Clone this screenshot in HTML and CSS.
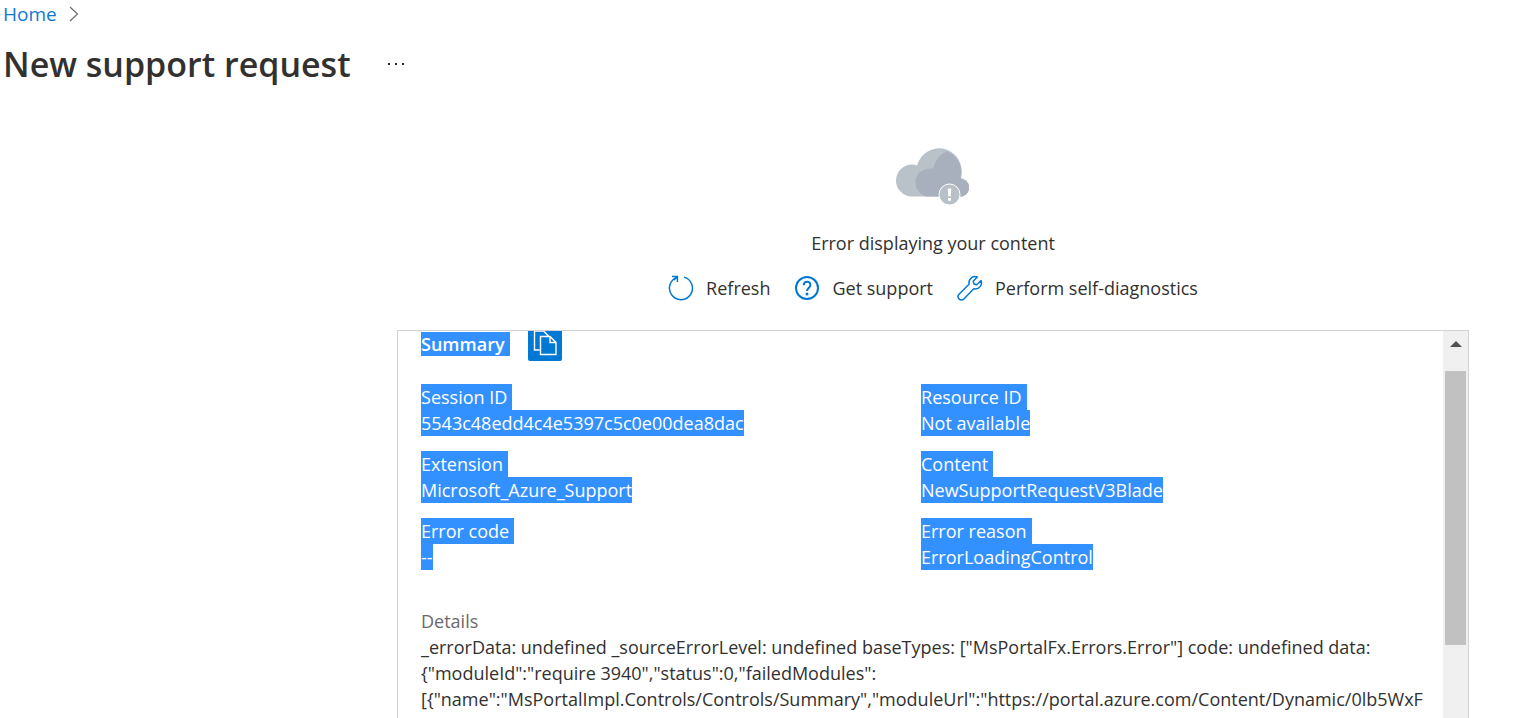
FILE: index.html
```html
<!DOCTYPE html>
<html lang="en">
<head>
<meta charset="utf-8">
<title>New support request</title>
<link rel="stylesheet" href="styles.css">
</head>
<body>
<header class="header">
  <nav class="breadcrumb" aria-label="Breadcrumb">
    <a href="#">Home</a>
    <svg width="10" height="16" viewBox="0 0 10 16" fill="none" stroke="#6b6b6b" stroke-width="1.2"><path d="M1 1l7.500 7L1 15"/></svg>
  </nav>
  <div class="title-row">
    <h1>New support request</h1>
    <button class="more" type="button" aria-label="More"><svg width="18" height="4" viewBox="0 0 18 4" fill="#222"><path d="M1 1h2v2H1zM8 1h2v2H8zM15 1h2v2h-2z"/></svg></button>
  </div>
</header>
<main class="content">
  <svg class="cloud" width="76" height="58" viewBox="0 0 76 58">
    <path fill="#b9c1c9" d="M17 48.500A16 16 0 0 1 17 16.500c1.800 0 3.500.3 5.200.9A22.500 22.500 0 0 1 66.500 24c0 2.400-.3 4.500-.8 6.500a9.200 9.200 0 0 1 1.800 18z"/>
    <path fill="#a9b0bd" d="M31 48.500C24 46 20.500 40.500 20.500 34c0-8.500 7-14.500 18-13.500C40 12.500 45 6 51.500 3.200 60.500 6.800 66.500 15 66.500 24c0 2.400-.3 4.500-.8 6.500a9.200 9.200 0 0 1 1.800 18z"/>
    <circle cx="54.500" cy="46.500" r="10.500" fill="#b7bfc8" stroke="#fff" stroke-width="1"/>
    <path fill="#fff" d="M52.700 40.500h3.600l-.6 8h-2.400zM53 50h3v2.800h-3z"/>
  </svg>
  <p class="message">Error displaying your content</p>
  <div class="actions">
    <button class="action" type="button">
      <svg width="26" height="26" viewBox="0 0 26 26" fill="none" stroke="#0078d4" stroke-width="1.500"><path d="M16 2.100A11.500 11.500 0 1 1 9 2.400M4 1.600h5.400V7M9.400 1.600L6 5"/></svg>
      Refresh</button>
    <button class="action" type="button">
      <svg width="26" height="26" viewBox="0 0 26 26" fill="none" stroke="#0078d4" stroke-width="2"><circle cx="13" cy="13" r="11"/><path d="M9.800 10.200c0-4.600 6.600-4.400 6.600-.4 0 3-3.400 3.200-3.400 6.200"/><circle cx="13" cy="19" r="1.500" fill="#0078d4" stroke="none"/></svg>
      Get support</button>
    <button class="action" type="button">
      <svg width="26" height="26" viewBox="0 0 26 26" fill="none" stroke="#0078d4" stroke-width="1.500" stroke-linejoin="round"><path d="M20.300 2c-4-1.600-9 1.500-8.300 7.200L2 19.200c-3 3.200 1.600 7.700 4.800 4.800l10-10.200c5.500 1 9-4 7.200-8.200l-4.300 4.200-2.700-.8-.8-2.700z"/></svg>
      Perform self-diagnostics</button>
  </div>
  <section class="panel">
    <div class="panel-body">
      <div class="summary-head">
        <h2 class="mark gap">Summary</h2>
        <button class="copy" type="button" aria-label="Copy summary">
          <svg width="26" height="28" viewBox="0 0 26 28" fill="none" stroke="#fff" stroke-width="1.400"><path d="M7.500 20H2.500V1h9l5 5M8.500 6.500h9.500l6 6v12H8.500zM18 6.500v6h6"/></svg>
        </button>
      </div>
      <dl class="facts">
        <div><dt class="mark gap">Session ID</dt><dd class="mark">5543c48edd4c4e5397c5c0e00dea8dac</dd></div>
        <div><dt class="mark gap">Resource ID</dt><dd class="mark">Not available</dd></div>
        <div><dt class="mark gap">Extension</dt><dd class="mark">Microsoft_Azure_Support</dd></div>
        <div><dt class="mark gap">Content</dt><dd class="mark">NewSupportRequestV3Blade</dd></div>
        <div><dt class="mark gap">Error code</dt><dd class="mark">--</dd></div>
        <div><dt class="mark gap">Error reason</dt><dd class="mark">ErrorLoadingControl</dd></div>
      </dl>
      <h3>Details</h3>
      <p class="details">_errorData: undefined _sourceErrorLevel: undefined baseTypes: ["MsPortalFx.Errors.Error"] code: undefined data:<br>{"moduleId":"require 3940","status":0,"failedModules":<br>[{"name":"MsPortalImpl.Controls/Controls/Summary","moduleUrl":"https://portal.azure.com/Content/Dynamic/0lb5WxF</p>
    </div>
    <div class="scrollbar">
      <svg width="12" height="6" viewBox="0 0 12 6" fill="#505050"><path d="M6 0l6 6H0z"/></svg>
      <div class="thumb"></div>
    </div>
  </section>
</main>
</body>
</html>
```
FILE: styles.css
```css
* { box-sizing: border-box; }
body {
  margin: 0;
  height: 100vh;
  overflow: hidden;
  display: flex;
  flex-direction: column;
  background: #fff;
  color: #323130;
  font: 18px/26px "Open Sans", "Noto Sans", sans-serif;
}
h1, h2, h3, p, dl, dd { margin: 0; }
button { font: inherit; color: inherit; border: 0; padding: 0; background: none; }
svg { display: block; flex: none; }
.header { padding: 0 3px; }
.breadcrumb { display: flex; align-items: center; gap: 12px; height: 28px; font-size: 19px; }
.breadcrumb a { color: #0f78d4; text-decoration: none; }
.title-row { display: flex; align-items: center; gap: 36px; height: 72px; }
h1 { font-size: 34px; line-height: 48px; font-weight: 600; }
.content {
  flex: 1;
  min-height: 0;
  display: flex;
  flex-direction: column;
  align-items: center;
  margin: 0 58px 0 26%;
}
.cloud { margin-top: 48px; }
.message { margin-top: 24px; }
.actions { display: flex; gap: 24px; margin: 19px 0 29px; }
.action { display: flex; align-items: center; gap: 12px; white-space: nowrap; }
.panel {
  align-self: stretch;
  flex: 1;
  min-height: 0;
  display: flex;
  border: 1px solid #d2d2d2;
  border-bottom: 0;
}
.panel-body { flex: 1; min-width: 0; overflow: hidden; padding: 0 0 0 23px; }
.summary-head { display: flex; align-items: center; gap: 18px; height: 26px; }
.mark { width: fit-content; background: #3390ff; color: #fff; }
.gap { padding-right: 5px; }
h2 { font-size: 18px; line-height: 24px; font-weight: 600; }
.copy { padding: 3px 4px; background: #0078d4; border-radius: 2px; }
.facts { display: grid; grid-template-columns: 500px 1fr; row-gap: 15px; margin-top: 27px; }
h3 { margin-top: 38px; font-size: 18px; line-height: 26px; font-weight: 400; color: #6b6967; }
.details { white-space: nowrap; }
.scrollbar {
  flex: none;
  width: 25px;
  display: flex;
  flex-direction: column;
  align-items: center;
  gap: 24px;
  padding: 10px 2px 0;
  background: #f0f0f0;
}
.thumb { flex: none; align-self: stretch; height: 274px; background: #c1c1c1; }
```
